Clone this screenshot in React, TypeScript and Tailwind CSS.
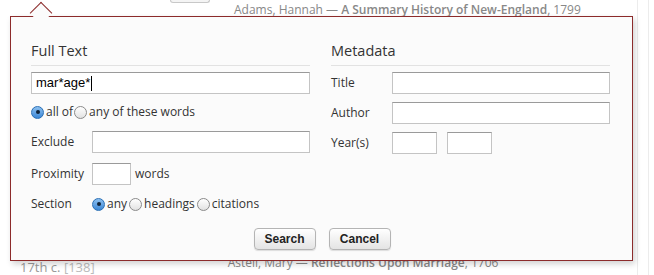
import React from "react";

function Radio({ checked }: { checked?: boolean }) {
  return (
    <span
      className={`mr-[2px] inline-flex h-[13px] w-[13px] shrink-0 items-center justify-center rounded-full border ${
        checked
          ? "border-[#2a6fb5] bg-gradient-to-b from-[#8cc0f0] to-[#3a87d6]"
          : "border-[#8a8a8a] bg-gradient-to-b from-white to-[#e2e2e2]"
      }`}
    >
      {checked && <span className="h-[4px] w-[4px] rounded-full bg-[#10243a]" />}
    </span>
  );
}

function Field({ className = "", value }: { className?: string; value?: string }) {
  return (
    <div
      className={`flex h-[22px] items-center border border-[#c4c4c4] border-t-[#9a9a9a] bg-white px-[4px] font-['Liberation_Sans',sans-serif] text-[13px] text-black ${className}`}
    >
      {value}
      {value !== undefined && <span className="ml-px h-[15px] w-px bg-black" />}
    </div>
  );
}

function Row({ label, className = "", children }: { label: string; className?: string; children: React.ReactNode }) {
  return (
    <div className={`flex h-[22px] items-center ${className}`}>
      <span className="w-[61px] shrink-0">{label}</span>
      {children}
    </div>
  );
}

function Btn({ label }: { label: string }) {
  return (
    <button className="h-[22px] w-[62px] rounded-[4px] border border-[#b4b4b4] bg-gradient-to-b from-white to-[#e4e4e4] font-['Liberation_Sans',sans-serif] text-[12px] font-bold text-[#222] shadow-[0_1px_1px_rgba(0,0,0,0.12)]">
      {label}
    </button>
  );
}

export default function App() {
  return (
    <div className="relative h-[275px] w-[654px] overflow-hidden bg-white font-['Open_Sans',sans-serif] text-[12px] text-[#333]">
      {/* page behind the popover */}
      <div className="flex h-full">
        <div className="flex flex-1 flex-col">
          <div className="flex h-[21px]">
            <div className="ml-[170px] h-[3px] w-[40px] rounded-b-[4px] border border-t-0 border-[#c8c8c8] bg-[#f4f4f4]" />
            <div className="ml-[24px] mt-[1px] text-[12px] leading-[18px] text-[#888]">
              Adams, Hannah — <span className="font-semibold">A Summary History of New-England</span>, 1799
            </div>
          </div>
          <div className="flex-1" />
          <div className="flex h-[15px] items-start">
            <div className="ml-[20px] text-[13px] leading-[15px] text-[#999]">
              17th c. <span className="text-[#bbb]">[138]</span>
            </div>
            <div className="ml-[133px] mt-[-5px] text-[12px] leading-[16px] text-[#888]">
              Astell, Mary — <span className="font-semibold">Reflections Upon Marriage</span>, 1706
            </div>
          </div>
        </div>
        <div className="w-[5px]" />
        <div className="w-px bg-[#ececec]" />
        <div className="w-[10px]" />
        <div className="w-px bg-[#ececec]" />
        <div className="w-[5px]" />
      </div>

      {/* popover */}
      <div className="absolute left-[10px] top-[16px] h-[245px] w-[623px] border border-[#8c2b2b] bg-[#fbfbfb] shadow-[2px_3px_6px_rgba(0,0,0,0.18)]">
        <div className="absolute left-[22px] top-[-12px] h-[16px] w-[16px] rotate-45 border-l border-t border-[#8c2b2b] bg-[#fbfbfb]" />
        <div className="relative flex flex-col px-[20px] pt-[24px]">
          <div className="flex gap-[21px]">
            <div className="flex w-[279px] flex-col">
              <div className="border-b border-[#e2e2e2] pb-[4px] text-[14.5px] leading-[20px] text-[#333]">Full Text</div>
              <div className="mt-[6px] flex flex-col">
                <Field className="w-[279px]" value="mar*age*" />
                <div className="mt-[8px] flex h-[20px] items-center">
                  <Radio checked />
                  <span className="mr-px">all of</span>
                  <Radio />
                  <span>any of these words</span>
                </div>
                <Row label="Exclude" className="mt-[9px]">
                  <Field className="w-[218px]" />
                </Row>
                <Row label="Proximity" className="mt-[10px]">
                  <Field className="w-[39px]" />
                  <span className="ml-[4px]">words</span>
                </Row>
                <Row label="Section" className="mt-[8px]">
                  <Radio checked />
                  <span className="mr-[2px]">any</span>
                  <Radio />
                  <span className="mr-[2px]">headings</span>
                  <Radio />
                  <span>citations</span>
                </Row>
              </div>
            </div>
            <div className="flex w-[279px] flex-col">
              <div className="border-b border-[#e2e2e2] pb-[4px] text-[14.5px] leading-[20px] text-[#333]">Metadata</div>
              <div className="mt-[6px] flex flex-col gap-[8px]">
                <Row label="Title">
                  <Field className="w-[218px]" />
                </Row>
                <Row label="Author">
                  <Field className="w-[218px]" />
                </Row>
                <Row label="Year(s)">
                  <Field className="w-[45px]" />
                  <Field className="ml-[10px] w-[45px]" />
                </Row>
              </div>
            </div>
          </div>
          <div className="mt-[13px] flex justify-center gap-[13px] pl-[1px]">
            <Btn label="Search" />
            <Btn label="Cancel" />
          </div>
        </div>
      </div>
    </div>
  );
}
